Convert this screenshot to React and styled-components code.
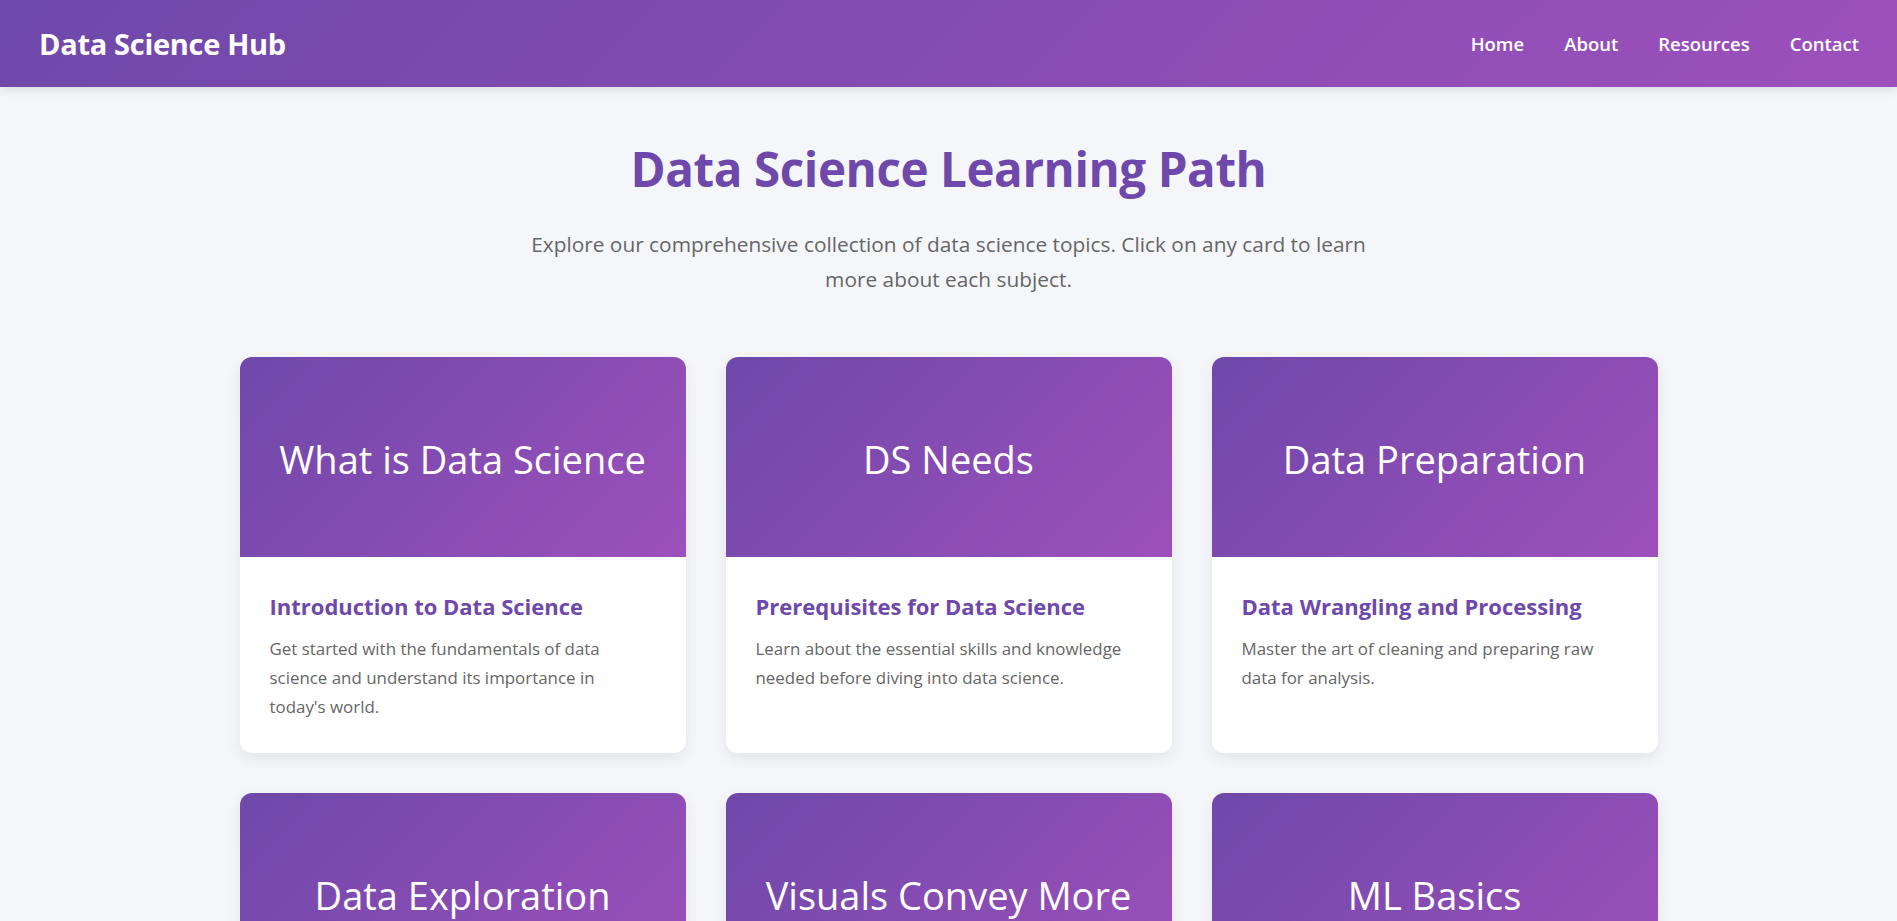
import styled, { createGlobalStyle } from "styled-components";

const GlobalStyle = createGlobalStyle`
  * { box-sizing: border-box; }
  body {
    margin: 0;
    font-family: "Open Sans", "Noto Sans", sans-serif;
    background: #f5f6fa;
    color: #333;
  }
`;

const Header = styled.header`
  height: 87px;
  padding: 0 38px 0 39px;
  display: flex;
  align-items: center;
  justify-content: space-between;
  background: linear-gradient(135deg, #6e48aa 0%, #9d50bb 100%);
  box-shadow: 0 2px 10px rgba(0, 0, 0, 0.12);
`;

const Logo = styled.div`
  color: #fff;
  font-size: 29px;
  font-weight: 700;
  letter-spacing: -0.3px;
`;

const Nav = styled.nav`
  display: flex;
  gap: 40px;
`;

const NavLink = styled.a`
  color: #fff;
  text-decoration: none;
  font-size: 18.5px;
  font-weight: 600;
`;

const Main = styled.main`
  padding: 49px 20px 60px;
`;

const Intro = styled.section`
  text-align: center;
  margin-bottom: 60px;
`;

const Title = styled.h1`
  margin: 0 0 26px;
  color: #6e48aa;
  font-size: 47.5px;
  line-height: normal;
  font-weight: 700;
  letter-spacing: -0.4px;
`;

const Subtitle = styled.p`
  margin: 0 auto;
  max-width: 866px;
  color: #666;
  font-size: 20.85px;
  line-height: 35px;
`;

const Grid = styled.div`
  display: grid;
  grid-template-columns: repeat(3, 446px);
  gap: 40px;
  justify-content: center;
`;

const Card = styled.article`
  background: #fff;
  border-radius: 12px;
  overflow: hidden;
  box-shadow: 0 5px 15px rgba(0, 0, 0, 0.08);
  cursor: pointer;
`;

const CardTop = styled.div`
  height: 200px;
  display: flex;
  align-items: center;
  justify-content: center;
  background: linear-gradient(135deg, #6e48aa 0%, #9d50bb 100%);
  color: #fff;
  font-size: 38px;
  font-weight: 400;
  text-align: center;
  padding: 4px 20px 0;
`;

const CardBody = styled.div`
  padding: 34px 30px 32px;
`;

const CardHeading = styled.h3`
  margin: 0 0 13px;
  color: #6e48aa;
  font-size: 22px;
  line-height: 30px;
  font-weight: 700;
`;

const CardText = styled.p`
  margin: 0;
  max-width: 375px;
  color: #666;
  font-size: 16.9px;
  line-height: 29px;
`;

const topics = [
  {
    label: "What is Data Science",
    heading: "Introduction to Data Science",
    text: "Get started with the fundamentals of data science and understand its importance in today's world.",
  },
  {
    label: "DS Needs",
    heading: "Prerequisites for Data Science",
    text: "Learn about the essential skills and knowledge needed before diving into data science.",
  },
  {
    label: "Data Preparation",
    heading: "Data Wrangling and Processing",
    text: "Master the art of cleaning and preparing raw data for analysis.",
  },
  {
    label: "Data Exploration",
    heading: "Exploratory Data Analysis",
    text: "Discover patterns, spot anomalies and test hypotheses with summary statistics.",
  },
  {
    label: "Visuals Convey More",
    heading: "Data Visualization",
    text: "Turn numbers into charts and graphs that tell a clear story.",
  },
  {
    label: "ML Basics",
    heading: "Machine Learning Fundamentals",
    text: "Understand the core algorithms that let computers learn from data.",
  },
];

export default function App() {
  return (
    <>
      <GlobalStyle />
      <Header>
        <Logo>Data Science Hub</Logo>
        <Nav>
          <NavLink href="#">Home</NavLink>
          <NavLink href="#">About</NavLink>
          <NavLink href="#">Resources</NavLink>
          <NavLink href="#">Contact</NavLink>
        </Nav>
      </Header>
      <Main>
        <Intro>
          <Title>Data Science Learning Path</Title>
          <Subtitle>
            Explore our comprehensive collection of data science topics. Click on any card to learn
            more about each subject.
          </Subtitle>
        </Intro>
        <Grid>
          {topics.map((t) => (
            <Card key={t.label}>
              <CardTop>{t.label}</CardTop>
              <CardBody>
                <CardHeading>{t.heading}</CardHeading>
                <CardText>{t.text}</CardText>
              </CardBody>
            </Card>
          ))}
        </Grid>
      </Main>
    </>
  );
}
